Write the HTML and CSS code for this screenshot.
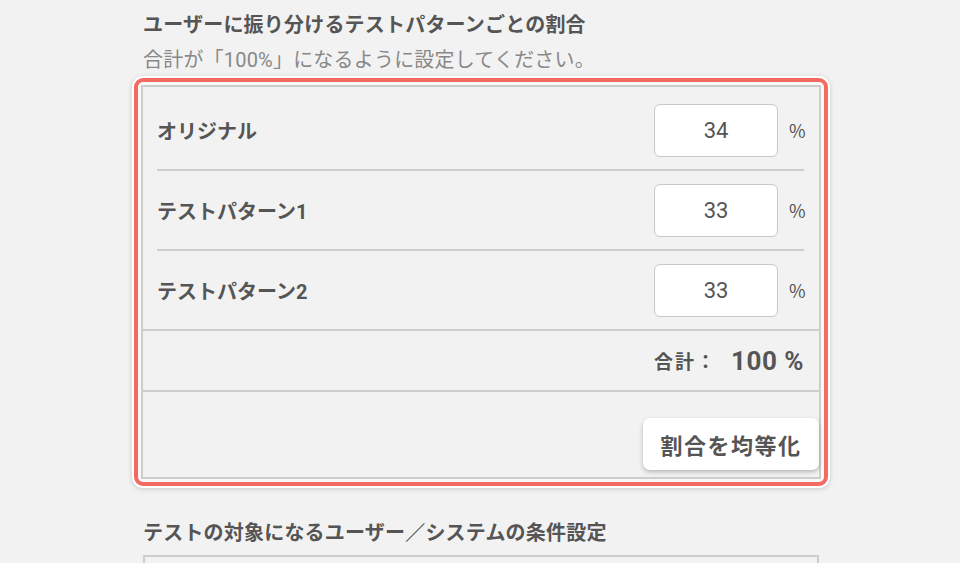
FILE: index.html
```html
<!DOCTYPE html>
<html lang="ja">
<head>
    <meta charset="UTF-8">
    <title>テストパターンの割合</title>
    <link rel="stylesheet" href="styles.css">
</head>
<body>

<div class="content">
    <h2 class="section-title">ユーザーに振り分けるテストパターンごとの割合</h2>
    <p class="section-note">合計が「100%」になるように設定してください。</p>

    <div class="highlight">
        <div class="panel">
            <div class="rows">
                <div class="row">
                    <span class="row-label">オリジナル</span>
                    <input class="ratio" type="text" value="34">
                    <span class="unit">%</span>
                </div>
                <div class="row">
                    <span class="row-label">テストパターン1</span>
                    <input class="ratio" type="text" value="33">
                    <span class="unit">%</span>
                </div>
                <div class="row">
                    <span class="row-label">テストパターン2</span>
                    <input class="ratio" type="text" value="33">
                    <span class="unit">%</span>
                </div>
            </div>
            <div class="total">
                <span class="total-label">合計：</span>
                <span class="total-value">100 %</span>
            </div>
            <div class="panel-foot">
                <button class="equalize">割合を均等化</button>
            </div>
        </div>
    </div>

    <h2 class="section-title second">テストの対象になるユーザー／システムの条件設定</h2>
    <div class="next-box"></div>
</div>

</body>
</html>
```

FILE: styles.css
```css
body {
    margin: 0;
    font-family: Roboto, "Noto Sans CJK JP", sans-serif;
    background-color: #f2f2f2;
    color: #555;
}
.content {
    width: 676px;
    margin-left: 143px;
    padding-top: 12px;
}
.section-title {
    margin: 0;
    font-size: 20px;
    line-height: 26px;
    letter-spacing: 0.2px;
    font-weight: bold;
    color: #555;
}
.section-title.second {
    margin-top: 34px;
}
.section-note {
    margin: 9px 0 0;
    font-size: 20px;
    line-height: 26px;
    letter-spacing: 0.2px;
    color: #888;
}
.highlight {
    margin: 5px -9px 0;
    border: 4px solid #f36a63;
    border-radius: 9px;
    padding: 3px;
    background-color: #f8f8f8;
    box-shadow: 0 0 0 2px #fff, 0 1px 5px 2px rgba(0, 0, 0, 0.18);
}
.panel {
    border: 2px solid #cdcdcd;
    background-color: #f2f2f2;
}
.rows {
    padding-top: 4px;
    border-bottom: 2px solid #cdcdcd;
}
.row {
    display: flex;
    align-items: center;
    height: 78px;
    margin: 0 15px 0 14px;
    border-bottom: 2px solid #cdcdcd;
}
.row:last-child {
    border-bottom: none;
}
.row-label {
    flex: 1;
    font-size: 20px;
    font-weight: bold;
}
.ratio {
    width: 124px;
    height: 53px;
    box-sizing: border-box;
    border: 1px solid #c8c8c8;
    border-radius: 6px;
    background-color: #fff;
    text-align: center;
    font-family: Roboto, "Noto Sans CJK JP", sans-serif;
    font-size: 22px;
    color: #555;
    padding: 0;
}
.unit {
    margin-left: 11px;
    font-family: "Noto Sans CJK JP", sans-serif;
    font-size: 18px;
    width: 15px;
}
.total {
    display: flex;
    justify-content: flex-end;
    align-items: center;
    height: 59px;
    padding-right: 15px;
    border-bottom: 2px solid #cdcdcd;
}
.total-label {
    font-size: 19px;
    font-weight: bold;
    letter-spacing: 2px;
    margin-right: 14px;
}
.total-value {
    font-size: 26px;
    font-weight: bold;
    letter-spacing: 0.5px;
}
.panel-foot {
    display: flex;
    justify-content: flex-end;
    padding: 26px 0 7px;
}
.equalize {
    width: 176px;
    height: 52px;
    border: none;
    border-radius: 7px;
    background-color: #fff;
    box-shadow: 0 2px 4px rgba(0, 0, 0, 0.25);
    font-family: Roboto, "Noto Sans CJK JP", sans-serif;
    font-size: 22px;
    font-weight: bold;
    letter-spacing: 1.5px;
    color: #555;
    cursor: pointer;
}
.next-box {
    margin-top: 9px;
    height: 40px;
    border: 2px solid #cdcdcd;
    border-bottom: none;
}
```
